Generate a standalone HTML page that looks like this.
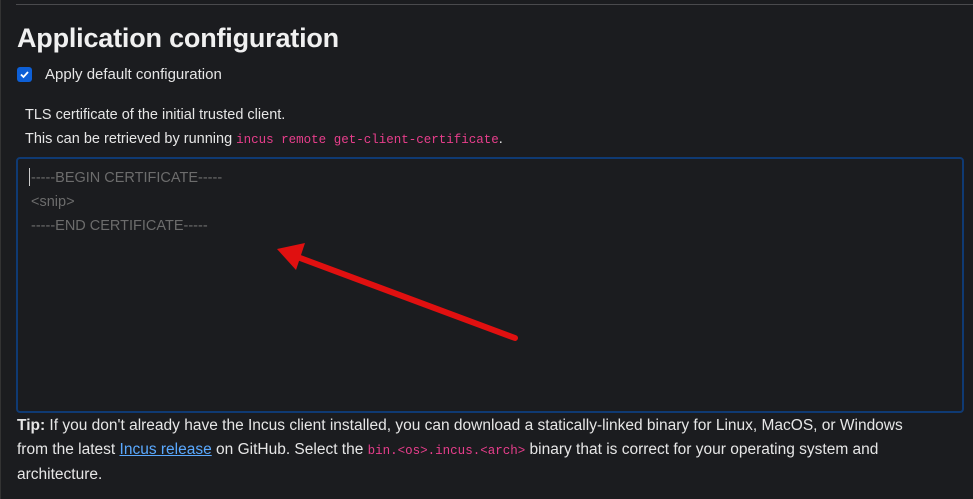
<!DOCTYPE html>
<html><head><style>
html,body{margin:0;padding:0;width:973px;height:499px;overflow:hidden;background:#1b1c1f;font-family:"Liberation Sans",sans-serif;color:#e6e6e6;}
.lb{position:absolute;left:0;top:0;width:1px;height:499px;background:#333;}
.hr{position:absolute;left:16px;right:0;top:4px;height:1px;background:#4a4a4d;}
h1{position:absolute;left:17px;top:23px;margin:0;font-size:27px;font-weight:bold;color:#f0f0f0;letter-spacing:-0.2px;}
.cb{position:absolute;left:17px;top:67px;width:15px;height:15px;background:#0d5fd6;border-radius:3px;}
.l1{position:absolute;left:45px;top:66px;font-size:15px;}
.t{position:absolute;left:25px;font-size:14.5px;}
code{font-family:"Liberation Mono",monospace;color:#e83e8c;font-size:12.5px;}
.ta{position:absolute;left:16px;top:157px;width:944px;height:252px;border:2px solid #0f3a73;border-radius:4px;background:#1b1c1f;}
.ph{position:absolute;left:31px;font-size:14.5px;color:#6c6c6c;}
.cur{position:absolute;left:29px;top:168px;width:1px;height:18px;background:#ccc;}
.tip{position:absolute;left:17px;top:414px;width:912px;font-size:15.5px;line-height:24px;color:#e6e6e6;}
a{color:#5aa9ff;text-decoration:underline;}
</style></head><body>
<div class="lb"></div><div class="hr"></div>
<h1>Application configuration</h1>
<div class="cb"><svg width="15" height="15" viewBox="0 0 15 15"><path d="M4 7.5l2.5 2.5 4.5-5" stroke="#fff" stroke-width="1.8" fill="none"/></svg></div>
<div class="l1">Apply default configuration</div>
<div class="t" style="top:107px">TLS certificate of the initial trusted client.</div>
<div class="t" style="top:131px">This can be retrieved by running <code>incus remote get-client-certificate</code>.</div>
<div class="ta"></div>
<div class="cur"></div>
<div class="ph" style="top:170px">-----BEGIN CERTIFICATE-----</div>
<div class="ph" style="top:194px">&lt;snip&gt;</div>
<div class="ph" style="top:218px">-----END CERTIFICATE-----</div>
<svg style="position:absolute;left:0;top:0" width="973" height="499"><line x1="515" y1="338" x2="292" y2="255" stroke="#e01010" stroke-width="6" stroke-linecap="round"/><path d="M277 249 L305 243 L296 270 Z" fill="#e01010"/></svg>
<div class="tip"><b>Tip:</b> If you don't already have the Incus client installed, you can download a statically-linked binary for Linux, MacOS, or Windows from the latest <a>Incus release</a> on GitHub. Select the <code>bin.&lt;os&gt;.incus.&lt;arch&gt;</code> binary that is correct for your operating system and architecture.</div>
</body></html>
